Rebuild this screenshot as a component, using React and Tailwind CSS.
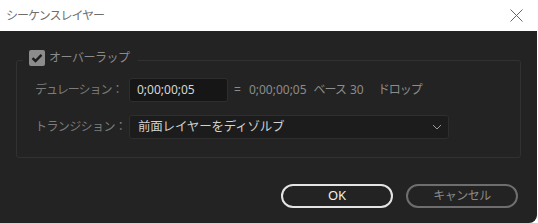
import React from "react";

const FONT = { fontFamily: '"Noto Sans", "Noto Sans CJK JP", sans-serif' };

export default function App() {
  return (
    <div className="w-[538px] h-[223px] bg-white flex flex-col overflow-hidden" style={FONT}>
      <div className="h-[31px] flex items-center justify-between pl-[6px] pr-[15px] bg-white">
        <span className="text-[12px] tracking-[-1px] text-[#6e6e6e] leading-none">シーケンスレイヤー</span>
        <svg width="13" height="13" viewBox="0 0 13 13" className="mt-[-1px]">
          <path d="M0.5 0.5 L12.5 12.5 M12.5 0.5 L0.5 12.5" stroke="#666" strokeWidth="1" fill="none" />
        </svg>
      </div>
      <div className="w-[537px] flex-1 bg-[#232323] rounded-br-[8px] flex flex-col px-[16px] pt-[19px]">
        <fieldset className="border border-[#313131] rounded-[3px] pl-[6px] pr-[6px] pb-[18px]">
          <legend className="h-[20px] flex items-start pl-[6px] pr-[9px]">
            <span className="w-[16px] h-[16px] rounded-[2px] bg-[#8c8c8c] flex items-center justify-center">
              <svg width="12" height="10" viewBox="0 0 12 10">
                <path d="M1.5 5.2 L4.5 8 L10.5 1.8" stroke="#1c1c1c" strokeWidth="2.4" fill="none" />
              </svg>
            </span>
            <span className="ml-[4px] text-[12px] tracking-[-0.5px] leading-[16px] text-[#8a8a8a]">オーバーラップ</span>
          </legend>
          <div className="pl-[12px] pt-[8px] flex flex-col gap-[13px]">
            <div className="flex items-center h-[24px]">
              <span className="w-[94px] text-[12px] tracking-[-1px] text-[#7c7c7c]">デュレーション：</span>
              <div className="w-[99px] h-[24px] bg-[#161616] border border-[#2e2e2e] rounded-[3px] flex items-center pl-[7px]">
                <span className="text-[12px] text-[#d6d6d6]">0;00;00;05</span>
              </div>
              <div className="ml-[6px] flex items-center text-[12px] text-[#8c8c8c]">
                <span>=</span>
                <span className="ml-[8px]">0;00;00;05</span>
                <span className="ml-[7px] tracking-[-1px]">ベース</span>
                <span className="ml-[4px]">30</span>
                <span className="ml-[14px] tracking-[-1px]">ドロップ</span>
              </div>
            </div>
            <div className="flex items-center h-[24px]">
              <span className="w-[94px] text-[12px] tracking-[-0.6px] text-[#7c7c7c]">トランジション：</span>
              <div className="w-[320px] h-[24px] bg-[#1c1c1c] border border-[#2e2e2e] rounded-[3px] flex items-center justify-between pl-[8px] pr-[6px]">
                <span className="text-[12.5px] tracking-[-0.2px] text-[#d2d2d2]">前面レイヤーをディゾルブ</span>
                <svg width="10" height="6" viewBox="0 0 10 6">
                  <path d="M1 1 L5 5 L9 1" stroke="#9a9a9a" strokeWidth="1" fill="none" />
                </svg>
              </div>
            </div>
          </div>
        </fieldset>
        <div className="flex justify-end gap-[13px] mt-[26px] pr-[3px]">
          <button className="w-[112px] h-[24px] rounded-full border-2 border-[#e4e4e4] text-[13px] text-[#f0f0f0] flex items-center justify-center">OK</button>
          <button className="w-[112px] h-[24px] rounded-full border-2 border-[#6e6e6e] text-[12px] tracking-[-0.5px] text-[#8a8a8a] flex items-center justify-center">キャンセル</button>
        </div>
      </div>
    </div>
  );
}
